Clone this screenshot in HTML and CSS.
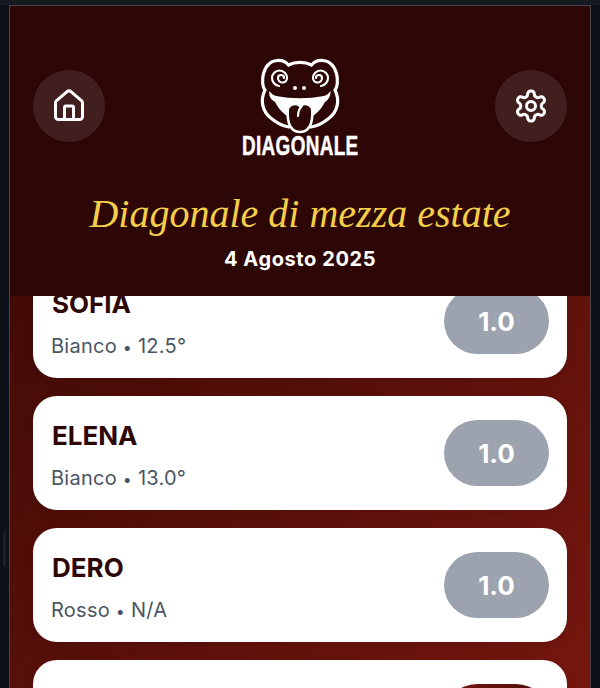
FILE: index.html
```html
<!DOCTYPE html>
<html lang="it">

<head>
<meta charset="utf-8" />
<title>Diagonale di mezza estate</title>
<link rel="stylesheet" href="styles.css">
</head>

<body>
<div class="topbar"></div>
<div class="shell">
	<div class="grip"></div>
	<div class="app">
		<header class="header">
			<div class="nav">
				<button class="round-btn" aria-label="Home">
					<svg class="icon" viewBox="0 0 24 24"><path d="M15 21v-8a1 1 0 0 0-1-1h-4a1 1 0 0 0-1 1v8" /><path d="M3 10a2 2 0 0 1 .709-1.528l7-5.999a2 2 0 0 1 2.582 0l7 5.999A2 2 0 0 1 21 10v9a2 2 0 0 1-2 2H5a2 2 0 0 1-2-2z" /></svg>
				</button>
				<div class="logo">
					<svg class="frog" viewBox="258 55 84 80">
						<path class="frog-line" d="M311 127C318 126 323 123 328 119C338 112 340 100 335 90C340 84 338 62 323 60.500C318 60 314 62 311.500 65C305 61.500 295 61.500 288.500 65C286 62 282 60 277 60.500C262 62 260 84 265 90C260 100 262 112 272 119C277 123 282 126 289 127" />
						<path class="frog-fill" d="M269.500 91Q272 95 276 96Q300 100.500 324 96Q328 95 330.500 91Q331 98 325 102C321 110 312 120 300 120C288 120 279 110 275 102C269 98 269 95 269.500 91Z" />
						<path class="frog-tongue" d="M288 108C291 103 298 103 300 106C302 103 309 103 312 108C313 118 312 132 300 132C288 132 287 118 288 108Z" />
						<path class="frog-thin" d="M302 106C299 109 298 112 298 116" />
						<path class="frog-thin" d="M284 78A3 3 0 0 0 278 78A4.500 4.500 0 0 0 287 78A7.500 7.500 0 0 0 272 78A8 8 0 0 0 279 86" />
						<path class="frog-thin" d="M316 78A3 3 0 0 1 322 78A4.500 4.500 0 0 1 313 78A7.500 7.500 0 0 1 328 78A8 8 0 0 1 321 86" />
						<circle class="frog-dot" cx="295" cy="88" r="2" />
						<circle class="frog-dot" cx="304" cy="88" r="2" />
					</svg>
					<div class="wordmark">DIAGONALE</div>
				</div>
				<button class="round-btn" aria-label="Impostazioni">
					<svg class="icon" viewBox="0 0 24 24"><path d="M12.220 2h-.44a2 2 0 0 0-2 2v.18a2 2 0 0 1-1 1.730l-.43.25a2 2 0 0 1-2 0l-.15-.08a2 2 0 0 0-2.730.73l-.22.38a2 2 0 0 0 .73 2.730l.15.1a2 2 0 0 1 1 1.720v.51a2 2 0 0 1-1 1.740l-.15.09a2 2 0 0 0-.73 2.730l.22.38a2 2 0 0 0 2.730.73l.15-.08a2 2 0 0 1 2 0l.43.25a2 2 0 0 1 1 1.730V20a2 2 0 0 0 2 2h.44a2 2 0 0 0 2-2v-.18a2 2 0 0 1 1-1.730l.43-.25a2 2 0 0 1 2 0l.15.08a2 2 0 0 0 2.730-.73l.22-.39a2 2 0 0 0-.73-2.730l-.15-.08a2 2 0 0 1-1-1.740v-.5a2 2 0 0 1 1-1.740l.15-.09a2 2 0 0 0 .73-2.730l-.22-.38a2 2 0 0 0-2.730-.73l-.15.08a2 2 0 0 1-2 0l-.43-.25a2 2 0 0 1-1-1.730V4a2 2 0 0 0-2-2z" /><circle cx="12" cy="12" r="3" /></svg>
				</button>
			</div>
			<h1 class="title">Diagonale di mezza estate</h1>
			<div class="date">4 Agosto 2025</div>
		</header>
		<main class="list">
			<div class="card">
				<div class="info">
					<div class="name">SOFIA</div>
					<div class="meta">Bianco <span class="sep">•</span> 12.5°</div>
				</div>
				<div class="score">1.0</div>
			</div>
			<div class="card">
				<div class="info">
					<div class="name">ELENA</div>
					<div class="meta">Bianco <span class="sep">•</span> 13.0°</div>
				</div>
				<div class="score">1.0</div>
			</div>
			<div class="card">
				<div class="info">
					<div class="name">DERO</div>
					<div class="meta">Rosso <span class="sep">•</span> N/A</div>
				</div>
				<div class="score">1.0</div>
			</div>
			<div class="card">
				<div class="info">
					<div class="name">&nbsp;</div>
					<div class="meta">&nbsp;</div>
				</div>
				<div class="score score-hot"></div>
			</div>
		</main>
	</div>
</div>
</body>

</html>
```

FILE: styles.css
```css
html, body { height: 100%; margin: 0; overflow: hidden; }
body { background: #0d1117; font-family: Inter, sans-serif; }
.topbar { background: #161b22; height: 5px; }
.shell { display: flex; height: 683px; }
.grip { flex: none; position: relative; width: 9px; }
.grip::after { background: #1b1f28; border-radius: 2px; content: ""; height: 36px; left: 3px; position: absolute; top: 526px; width: 3px; }
.app { background: linear-gradient(135deg, #340704, #76170f); border: 1px solid #4b4446; border-bottom: 0; display: flex; flex-direction: column; overflow: hidden; width: 580px; }
.header { background: #2d0606; flex: none; height: 290px; position: relative; text-align: center; z-index: 1; }
.nav { align-items: flex-start; display: flex; justify-content: space-between; padding: 49px 23px 0; }
.round-btn { align-items: center; background: rgba(255, 255, 255, 0.1); border: 0; border-radius: 50%; display: flex; height: 72px; justify-content: center; margin-top: 15px; padding: 0; width: 72px; }
.icon { fill: none; height: 36px; stroke: #fff; stroke-linecap: round; stroke-linejoin: round; stroke-width: 2; width: 36px; }
.logo { align-items: center; display: flex; flex-direction: column; width: 120px; }
.frog { display: block; flex: none; height: 80px; width: 84px; }
.frog-line { fill: none; stroke: #fff; stroke-linecap: round; stroke-width: 3.200; }
.frog-fill { fill: #fff; }
.frog-tongue { fill: #2d0606; stroke: #fff; stroke-width: 2.500; }
.frog-thin { fill: none; stroke: #fff; stroke-linecap: round; stroke-width: 2.200; }
.frog-dot { fill: #fff; }
.wordmark { -webkit-text-stroke: 0.5px #fff; color: #fff; font-family: "Liberation Sans", sans-serif; font-size: 27px; font-weight: 700; letter-spacing: 0.5px; line-height: 22px; transform: scaleX(0.7); white-space: nowrap; }
.title { color: #f5cf4a; font-family: "Liberation Serif", serif; font-size: 40px; font-style: italic; font-weight: 400; line-height: 48px; margin: 33px 0 0; }
.date { color: #fff; font-size: 20px; font-weight: 700; letter-spacing: 0.6px; line-height: 28px; margin-top: 7px; }
.list { display: flex; flex-direction: column; gap: 18px; margin-top: -32px; padding: 0 23px; }
.card { align-items: center; background: #fff; border-radius: 24px; box-shadow: 0 4px 12px rgba(0, 0, 0, 0.1); box-sizing: border-box; display: flex; flex: none; height: 114px; justify-content: space-between; padding: 0 18px 0 19px; }
.info { padding-top: 6px; }
.name { color: #2d0606; font-size: 26px; font-weight: 700; line-height: 32px; }
.meta { color: #4b5563; font-size: 20px; letter-spacing: 0.25px; line-height: 28px; margin: 12px 0 0 -1px; }
.sep { font-size: 16px; }
.score { align-items: center; background: #9ca3af; border-radius: 33px; color: #fff; display: flex; font-size: 26px; font-weight: 700; height: 66px; justify-content: center; width: 105px; }
.score-hot { background: linear-gradient(135deg, #7a1810, #2d0606); }
```
